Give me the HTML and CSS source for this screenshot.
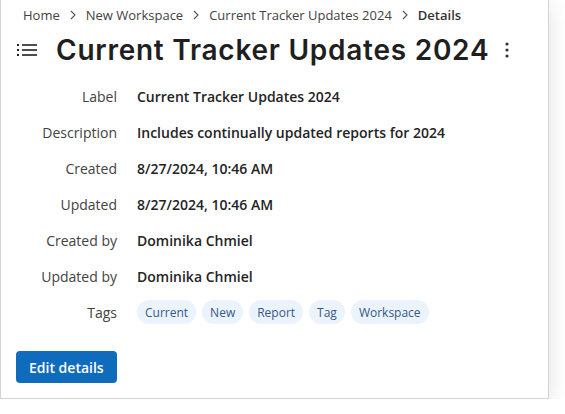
FILE: index.html
```html
<!DOCTYPE html>
<html>
<head>
<meta charset="utf-8">
<link rel="stylesheet" href="styles.css">
</head>
<body>
<div class="card">
  <nav class="crumbs">
    <span class="crumb">Home</span>
    <svg class="chev" viewBox="0 0 6 10" width="6" height="10"><path d="M1 1 L5 5 L1 9" fill="none" stroke="#555" stroke-width="1.1"/></svg>
    <span class="crumb">New Workspace</span>
    <svg class="chev" viewBox="0 0 6 10" width="6" height="10"><path d="M1 1 L5 5 L1 9" fill="none" stroke="#555" stroke-width="1.1"/></svg>
    <span class="crumb">Current Tracker Updates 2024</span>
    <svg class="chev" viewBox="0 0 6 10" width="6" height="10"><path d="M1 1 L5 5 L1 9" fill="none" stroke="#555" stroke-width="1.1"/></svg>
    <span class="crumb current">Details</span>
  </nav>
  <header class="head">
    <svg class="menu" viewBox="0 0 20 14" width="20" height="14">
      <rect x="0" y="1" width="2" height="2" fill="#222"/>
      <rect x="5" y="1.2" width="15" height="1.6" fill="#222"/>
      <rect x="0" y="6" width="2" height="2" fill="#222"/>
      <rect x="5" y="6.2" width="15" height="1.6" fill="#222"/>
      <rect x="0" y="11" width="2" height="2" fill="#222"/>
      <rect x="5" y="11.2" width="15" height="1.6" fill="#222"/>
    </svg>
    <h1 class="title">Current Tracker Updates 2024</h1>
    <svg class="kebab" viewBox="0 0 6 16" width="6" height="16">
      <circle cx="3" cy="2" r="1.6" fill="#333"/>
      <circle cx="3" cy="8" r="1.6" fill="#333"/>
      <circle cx="3" cy="14" r="1.6" fill="#333"/>
    </svg>
  </header>
  <dl class="details">
    <dt>Label</dt><dd>Current Tracker Updates 2024</dd>
    <dt>Description</dt><dd>Includes continually updated reports for 2024</dd>
    <dt>Created</dt><dd>8/27/2024, 10:46 AM</dd>
    <dt>Updated</dt><dd>8/27/2024, 10:46 AM</dd>
    <dt>Created by</dt><dd>Dominika Chmiel</dd>
    <dt>Updated by</dt><dd>Dominika Chmiel</dd>
    <dt>Tags</dt>
    <dd class="tags">
      <span class="tag">Current</span>
      <span class="tag">New</span>
      <span class="tag">Report</span>
      <span class="tag">Tag</span>
      <span class="tag">Workspace</span>
    </dd>
  </dl>
  <button class="btn">Edit details</button>
</div>
</body>
</html>
```
FILE: styles.css
```css
html, body {
  margin: 0;
  padding: 0;
  background: #ffffff;
}
body {
  font-family: "Open Sans", "Liberation Sans", sans-serif;
  color: #242424;
}
.card {
  width: 549px;
  box-sizing: border-box;
  border: 1px solid #d4d4d4;
  border-top: none;
  background: #fff;
  box-shadow: 0 6px 20px rgba(0,0,0,0.12);
  padding: 0 0 15px 0;
}
.crumbs {
  display: flex;
  align-items: center;
  height: 30px;
  padding-left: 22px;
  font-size: 13px;
  color: #424242;
}
.chev {
  margin: 0 10px 0 10px;
}
.crumb.current {
  font-weight: 600;
  color: #333;
}
.head {
  display: flex;
  align-items: center;
  height: 40px;
  padding-left: 16px;
}
.menu {
  margin-right: 19px;
}
.title {
  margin: 0;
  font-family: "Inter", "Open Sans", sans-serif;
  font-weight: 600;
  font-size: 28px;
  letter-spacing: 0.75px;
  color: #1f1f1f;
  line-height: 40px;
}
.kebab {
  margin-left: 15px;
}
.details {
  display: grid;
  grid-template-columns: 100px 1fr;
  grid-auto-rows: 36px;
  column-gap: 20px;
  margin: 8px 0 0 16px;
  font-size: 14px;
}
.details dt {
  display: flex;
  align-items: center;
  justify-content: flex-end;
  color: #424242;
}
.details dd {
  margin: 0;
  display: flex;
  align-items: center;
  font-weight: 600;
  color: #242424;
}
.details dd.tags {
  gap: 6px;
  font-weight: 400;
}
.tag {
  display: inline-flex;
  align-items: center;
  height: 24px;
  padding: 0 8px;
  border-radius: 12px;
  background: #ebf3fc;
  color: #35598a;
  font-size: 12px;
}
.btn {
  display: block;
  margin: 21px 0 0 15px;
  height: 32px;
  padding: 0 13px;
  border: none;
  border-radius: 4px;
  background: #0f6cbd;
  color: #fff;
  font-family: "Open Sans", sans-serif;
  font-weight: 600;
  font-size: 14px;
}
```
